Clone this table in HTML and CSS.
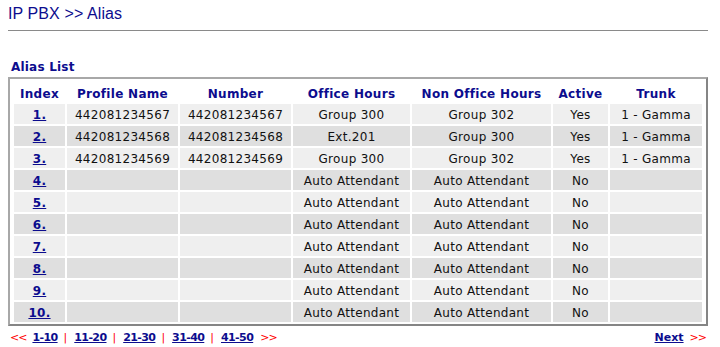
FILE: index.html
```html
<!DOCTYPE html>
<html>
<head>
<meta charset="utf-8">
<link rel="stylesheet" href="styles.css">
</head>
<body>
<h1 class="title">IP PBX &gt;&gt; Alias</h1>
<div class="rule"></div>
<h2 class="section">Alias List</h2>
<div class="box">
<table class="alias">
<colgroup>
<col class="c-index"><col class="c-profile"><col class="c-number"><col class="c-office"><col class="c-non"><col class="c-active"><col class="c-trunk">
</colgroup>
<thead>
<tr><th>Index</th><th>Profile Name</th><th>Number</th><th>Office Hours</th><th>Non Office Hours</th><th>Active</th><th>Trunk</th></tr>
</thead>
<tbody>
<tr class="odd"><td><a href="#">1.</a></td><td>442081234567</td><td>442081234567</td><td>Group 300</td><td>Group 302</td><td>Yes</td><td>1 - Gamma</td></tr>
<tr class="even"><td><a href="#">2.</a></td><td>442081234568</td><td>442081234568</td><td>Ext.201</td><td>Group 300</td><td>Yes</td><td>1 - Gamma</td></tr>
<tr class="odd"><td><a href="#">3.</a></td><td>442081234569</td><td>442081234569</td><td>Group 300</td><td>Group 302</td><td>Yes</td><td>1 - Gamma</td></tr>
<tr class="even"><td><a href="#">4.</a></td><td></td><td></td><td>Auto Attendant</td><td>Auto Attendant</td><td>No</td><td></td></tr>
<tr class="odd"><td><a href="#">5.</a></td><td></td><td></td><td>Auto Attendant</td><td>Auto Attendant</td><td>No</td><td></td></tr>
<tr class="even"><td><a href="#">6.</a></td><td></td><td></td><td>Auto Attendant</td><td>Auto Attendant</td><td>No</td><td></td></tr>
<tr class="odd"><td><a href="#">7.</a></td><td></td><td></td><td>Auto Attendant</td><td>Auto Attendant</td><td>No</td><td></td></tr>
<tr class="even"><td><a href="#">8.</a></td><td></td><td></td><td>Auto Attendant</td><td>Auto Attendant</td><td>No</td><td></td></tr>
<tr class="odd"><td><a href="#">9.</a></td><td></td><td></td><td>Auto Attendant</td><td>Auto Attendant</td><td>No</td><td></td></tr>
<tr class="even"><td><a href="#">10.</a></td><td></td><td></td><td>Auto Attendant</td><td>Auto Attendant</td><td>No</td><td></td></tr>
</tbody>
</table>
</div>
<div class="pager">
<div class="pages"><span class="arrow">&lt;&lt;</span><a href="#">1-10</a><span class="sep">|</span><a href="#">11-20</a><span class="sep">|</span><a href="#">21-30</a><span class="sep">|</span><a href="#">31-40</a><span class="sep">|</span><a href="#">41-50</a><span class="arrow">&gt;&gt;</span></div>
<div class="next"><a href="#">Next</a><span class="arrow">&gt;&gt;</span></div>
</div>
</body>
</html>
```
FILE: styles.css
```css
html, body {
  margin: 0;
  padding: 0;
  background: #ffffff;
}
body {
  font-family: "DejaVu Sans", Verdana, sans-serif;
  font-size: 12px;
  color: #000;
  width: 720px;
  height: 347px;
  overflow: hidden;
}
.title {
  margin: 5px 0 0 8px;
  font-family: "Liberation Sans", Arial, sans-serif;
  font-weight: normal;
  font-size: 16px;
  line-height: 18px;
  letter-spacing: 0.1px;
  color: #0c0c8e;
}
.rule {
  margin: 7px 12px 0 8px;
  height: 0;
  border-top: 1px solid #8a8a8a;
}
.section {
  margin: 29px 0 0 11px;
  font-size: 12px;
  line-height: 14px;
  font-weight: bold;
  letter-spacing: 0.2px;
  color: #0c0c8e;
}
.box {
  margin: 3px 0 0 8px;
  width: 700px;
  box-sizing: border-box;
  border: 2px solid;
  border-color: #a8a8a8 #858585 #858585 #a8a8a8;
  padding: 0 2px;
}
.alias {
  border-collapse: separate;
  border-spacing: 2px;
  table-layout: fixed;
  width: 692px;
  letter-spacing: 0.3px;
}
.c-index { width: 51px; }
.c-profile { width: 111px; }
.c-number { width: 111px; }
.c-office { width: 117px; }
.c-non { width: 139px; }
.c-active { width: 55px; }
.c-trunk { width: 92px; }
.alias th {
  padding: 6px 0 1px;
  line-height: 14px;
  font-weight: bold;
  color: #0c0c8e;
  text-align: center;
  white-space: nowrap;
}
.alias td {
  padding: 4px 0 2px;
  line-height: 14px;
  text-align: center;
  white-space: nowrap;
  color: #111;
}
.odd td { background: #efefef; }
.even td { background: #dfdfdf; }
.alias a {
  color: #0c0c8e;
  font-weight: bold;
  text-decoration: underline;
}
.pager {
  display: flex;
  justify-content: space-between;
  margin: 5px 14px 0 10px;
  font-size: 11px;
  line-height: 13px;
}
.pages, .next {
  display: flex;
  align-items: baseline;
}
.pager a {
  color: #0c0c8e;
  font-weight: bold;
  text-decoration: underline;
}
.pages a {
  letter-spacing: -0.6px;
}
.arrow {
  color: #ff0000;
  letter-spacing: -1px;
}
.pages .arrow:first-child { margin-right: 6px; }
.pages .arrow:last-child { margin-left: 7px; }
.next .arrow { margin-left: 6px; }
.sep {
  color: #ff0000;
  margin: 0 7px 0 6px;
}
```
